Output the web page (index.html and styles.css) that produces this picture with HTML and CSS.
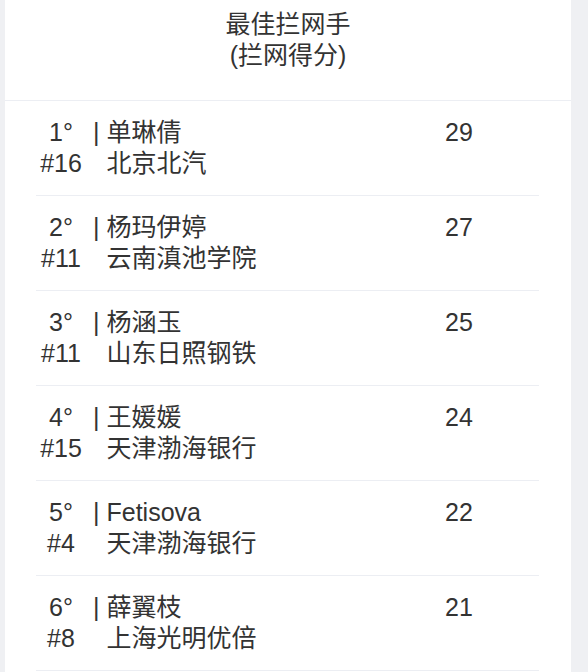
FILE: index.html
```html
<!DOCTYPE html>
<html lang="zh">
<head>
<meta charset="utf-8">
<title>最佳拦网手</title>
<link rel="stylesheet" href="styles.css">
</head>
<body>
<div class="card">
  <div class="card-header">
    <div class="title">最佳拦网手<br>(拦网得分)</div>
  </div>
  <div class="list">
    <div class="row">
      <div class="rank">1°<br>#16</div>
      <div class="pipe">|</div>
      <div class="info">单琳倩<br>北京北汽</div>
      <div class="score">29</div>
    </div>
    <div class="row">
      <div class="rank">2°<br>#11</div>
      <div class="pipe">|</div>
      <div class="info">杨玛伊婷<br>云南滇池学院</div>
      <div class="score">27</div>
    </div>
    <div class="row">
      <div class="rank">3°<br>#11</div>
      <div class="pipe">|</div>
      <div class="info">杨涵玉<br>山东日照钢铁</div>
      <div class="score">25</div>
    </div>
    <div class="row">
      <div class="rank">4°<br>#15</div>
      <div class="pipe">|</div>
      <div class="info">王媛媛<br>天津渤海银行</div>
      <div class="score">24</div>
    </div>
    <div class="row">
      <div class="rank">5°<br>#4</div>
      <div class="pipe">|</div>
      <div class="info">Fetisova<br>天津渤海银行</div>
      <div class="score">22</div>
    </div>
    <div class="row">
      <div class="rank">6°<br>#8</div>
      <div class="pipe">|</div>
      <div class="info">薛翼枝<br>上海光明优倍</div>
      <div class="score">21</div>
    </div>
  </div>
</div>
</body>
</html>
```
FILE: styles.css
```css
html, body {
  margin: 0;
  padding: 0;
  background: #eff0f3;
}
body {
  font-family: "Liberation Sans", Arial, "Noto Sans CJK SC", sans-serif;
  color: #333333;
  font-size: 25px;
  line-height: 31px;
}
.card {
  background: #ffffff;
  margin: 0 17px 0 5px;
  min-height: 672px;
}
.card-header {
  height: 101px;
  border-bottom: 1px solid #eceef3;
  box-sizing: border-box;
  padding-top: 9px;
  text-align: center;
}
.title {
  line-height: 31px;
}
.list {
  padding: 0 32px 0 31px;
}
.row {
  display: grid;
  grid-template-columns: 50px auto 1fr 94px;
  padding: 16px 0;
  border-bottom: 1px solid #eceef3;
}
.rank {
  text-align: center;
}
.pipe {
  padding-left: 7px;
  padding-right: 7px;
}
.score {
  text-align: left;
}
```
